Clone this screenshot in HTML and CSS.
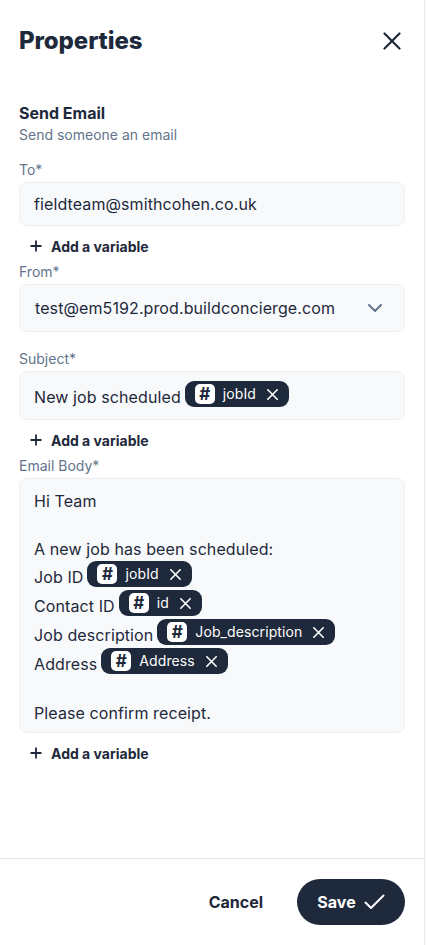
FILE: index.html
```html
<!DOCTYPE html>
<html lang="en">
<head>
<meta charset="utf-8">
<title>Properties</title>
<link rel="stylesheet" href="styles.css">
</head>
<body>
<div class="panel">
  <div class="content">
    <header class="header">
      <h1 class="title">Properties</h1>
      <button class="close" aria-label="Close">
        <svg width="18" height="18" viewBox="0 0 18 18"><path d="M1.5 1.5 L16.5 16.5 M16.5 1.5 L1.5 16.5" stroke="#1e293b" stroke-width="2.2" stroke-linecap="round" fill="none"/></svg>
      </button>
    </header>

    <section class="intro">
      <h2 class="intro-title">Send Email</h2>
      <p class="intro-sub">Send someone an email</p>
    </section>

    <div class="field field-to">
      <label class="label">To*</label>
      <div class="input">fieldteam@smithcohen.co.uk</div>
    </div>
    <button class="add-var">
      <svg width="12" height="12" viewBox="0 0 12 12"><path d="M6 0.5 V11.5 M0.5 6 H11.5" stroke="#1e293b" stroke-width="1.8" fill="none"/></svg>
      <span>Add a variable</span>
    </button>

    <div class="field field-from">
      <label class="label">From*</label>
      <div class="select">
        <span>test@em5192.prod.buildconcierge.com</span>
        <svg width="14" height="8" viewBox="0 0 14 8"><path d="M1 1 L7 7 L13 1" stroke="#64748b" stroke-width="2" stroke-linecap="round" stroke-linejoin="round" fill="none"/></svg>
      </div>
    </div>

    <div class="field field-subject">
      <label class="label">Subject*</label>
      <div class="rich rich-subject">
        <div class="line chip-line"><span class="txt">New job scheduled</span><span class="chip"><span class="hash">#</span><span class="chip-text">jobId</span><svg class="chip-x" width="11" height="11" viewBox="0 0 11 11"><path d="M0.8 0.8 L10.2 10.2 M10.2 0.8 L0.8 10.2" stroke="#fff" stroke-width="1.6" stroke-linecap="round" fill="none"/></svg></span></div>
      </div>
    </div>
    <button class="add-var">
      <svg width="12" height="12" viewBox="0 0 12 12"><path d="M6 0.5 V11.5 M0.5 6 H11.5" stroke="#1e293b" stroke-width="1.8" fill="none"/></svg>
      <span>Add a variable</span>
    </button>

    <div class="field field-body">
      <label class="label">Email Body*</label>
      <div class="rich rich-body">
        <div class="line">Hi Team</div>
        <div class="line"></div>
        <div class="line">A new job has been scheduled:</div>
        <div class="line chip-line"><span class="txt">Job ID</span><span class="chip"><span class="hash">#</span><span class="chip-text">jobId</span><svg class="chip-x" width="11" height="11" viewBox="0 0 11 11"><path d="M0.8 0.8 L10.2 10.2 M10.2 0.8 L0.8 10.2" stroke="#fff" stroke-width="1.6" stroke-linecap="round" fill="none"/></svg></span></div>
        <div class="line chip-line"><span class="txt">Contact ID</span><span class="chip"><span class="hash">#</span><span class="chip-text">id</span><svg class="chip-x" width="11" height="11" viewBox="0 0 11 11"><path d="M0.8 0.8 L10.2 10.2 M10.2 0.8 L0.8 10.2" stroke="#fff" stroke-width="1.6" stroke-linecap="round" fill="none"/></svg></span></div>
        <div class="line chip-line"><span class="txt">Job description</span><span class="chip"><span class="hash">#</span><span class="chip-text">Job_description</span><svg class="chip-x" width="11" height="11" viewBox="0 0 11 11"><path d="M0.8 0.8 L10.2 10.2 M10.2 0.8 L0.8 10.2" stroke="#fff" stroke-width="1.6" stroke-linecap="round" fill="none"/></svg></span></div>
        <div class="line chip-line"><span class="txt">Address</span><span class="chip"><span class="hash">#</span><span class="chip-text">Address</span><svg class="chip-x" width="11" height="11" viewBox="0 0 11 11"><path d="M0.8 0.8 L10.2 10.2 M10.2 0.8 L0.8 10.2" stroke="#fff" stroke-width="1.6" stroke-linecap="round" fill="none"/></svg></span></div>
        <div class="line"></div>
        <div class="line">Please confirm receipt.</div>
      </div>
    </div>
    <button class="add-var">
      <svg width="12" height="12" viewBox="0 0 12 12"><path d="M6 0.5 V11.5 M0.5 6 H11.5" stroke="#1e293b" stroke-width="1.8" fill="none"/></svg>
      <span>Add a variable</span>
    </button>
  </div>

  <footer class="footer">
    <button class="btn-cancel">Cancel</button>
    <button class="btn-save">
      <span>Save</span>
      <svg width="21" height="16" viewBox="0 0 21 16"><path d="M1.5 8.5 L7 14 L19.5 1.5" stroke="#fff" stroke-width="2" stroke-linecap="round" stroke-linejoin="round" fill="none"/></svg>
    </button>
  </footer>
</div>
</body>
</html>
```

FILE: styles.css
```css
* { box-sizing: border-box; }

html, body {
  margin: 0;
  padding: 0;
  background: #ffffff;
}

body {
  font-family: Inter, "Noto Sans", sans-serif;
  color: #1e293b;
}

button {
  font-family: inherit;
  background: none;
  border: none;
  padding: 0;
  margin: 0;
  color: inherit;
  cursor: pointer;
}

.panel {
  width: 425px;
  height: 945px;
  border-right: 1px solid #e5e7eb;
  display: flex;
  flex-direction: column;
}

.content {
  flex: 1;
  padding: 25px 19px 0 19px;
}

.header {
  display: flex;
  align-items: center;
  justify-content: space-between;
  height: 32px;
}

.title {
  margin: 0;
  font-size: 24px;
  line-height: 32px;
  font-weight: 800;
  letter-spacing: -0.1px;
}

.close {
  width: 18px;
  height: 18px;
  margin-right: 4px;
  display: flex;
}

.intro {
  margin-top: 44px;
}

.intro-title {
  margin: 0;
  font-size: 16px;
  line-height: 24px;
  font-weight: 700;
}

.intro-sub {
  margin: 0;
  font-size: 14px;
  line-height: 20px;
  color: #64748b;
}

.field { display: flex; flex-direction: column; }

.field-to { margin-top: 15px; }
.field-from { margin-top: 6px; }
.field-subject { margin-top: 17px; }
.field-body { margin-top: 6px; }

.label {
  font-size: 14px;
  line-height: 20px;
  color: #64748b;
  margin-bottom: 2px;
}

.input, .select, .rich {
  background: #f8f9fb;
  border: 1px solid #eceef2;
  border-radius: 8px;
  font-size: 16px;
  letter-spacing: 0.1px;
  color: #1e293b;
}

.input {
  height: 44px;
  padding: 0 14px;
  display: flex;
  align-items: center;
}

.select {
  height: 48px;
  padding: 0 22px 0 15px;
  display: flex;
  align-items: center;
  justify-content: space-between;
}

.rich {
  padding: 9px 14px;
}

.rich-body {
  padding: 10px 14px 7px 14px;
}

.line {
  min-height: 24px;
  line-height: 24px;
  display: flex;
  align-items: flex-start;
}

.chip-line {
  height: 29px;
}

.txt {
  padding-top: 4px;
  margin-right: 4px;
}

.chip {
  display: inline-flex;
  align-items: center;
  height: 26px;
  padding: 0 11px 0 10px;
  background: #1e293b;
  border-radius: 9px;
  color: #ffffff;
  letter-spacing: 0;
}

.hash {
  width: 20px;
  height: 20px;
  background: #ffffff;
  border-radius: 5px;
  color: #1e293b;
  font-size: 17px;
  font-weight: 700;
  line-height: 20px;
  text-align: center;
}

.chip-text {
  margin-left: 8px;
  font-size: 14px;
  line-height: 20px;
  font-weight: 400;
  letter-spacing: 0.1px;
}

.chip-x {
  margin-left: 11px;
}

.add-var {
  display: flex;
  align-items: center;
  height: 20px;
  margin-top: 10px;
  padding-left: 11px;
  font-size: 14px;
  font-weight: 700;
  color: #1e293b;
}

.add-var span {
  margin-left: 9px;
}

.footer {
  border-top: 1px solid #e2e8f0;
  height: 87px;
  padding: 0 19px 0 0;
  display: flex;
  align-items: center;
  justify-content: flex-end;
}

.btn-cancel {
  font-size: 16px;
  font-weight: 700;
  padding: 10px 16px;
  margin-right: 18px;
}

.btn-save {
  width: 108px;
  height: 46px;
  border-radius: 23px;
  background: #1e293b;
  color: #ffffff;
  font-size: 16px;
  font-weight: 700;
  display: flex;
  align-items: center;
  justify-content: center;
  gap: 8px;
}
```
